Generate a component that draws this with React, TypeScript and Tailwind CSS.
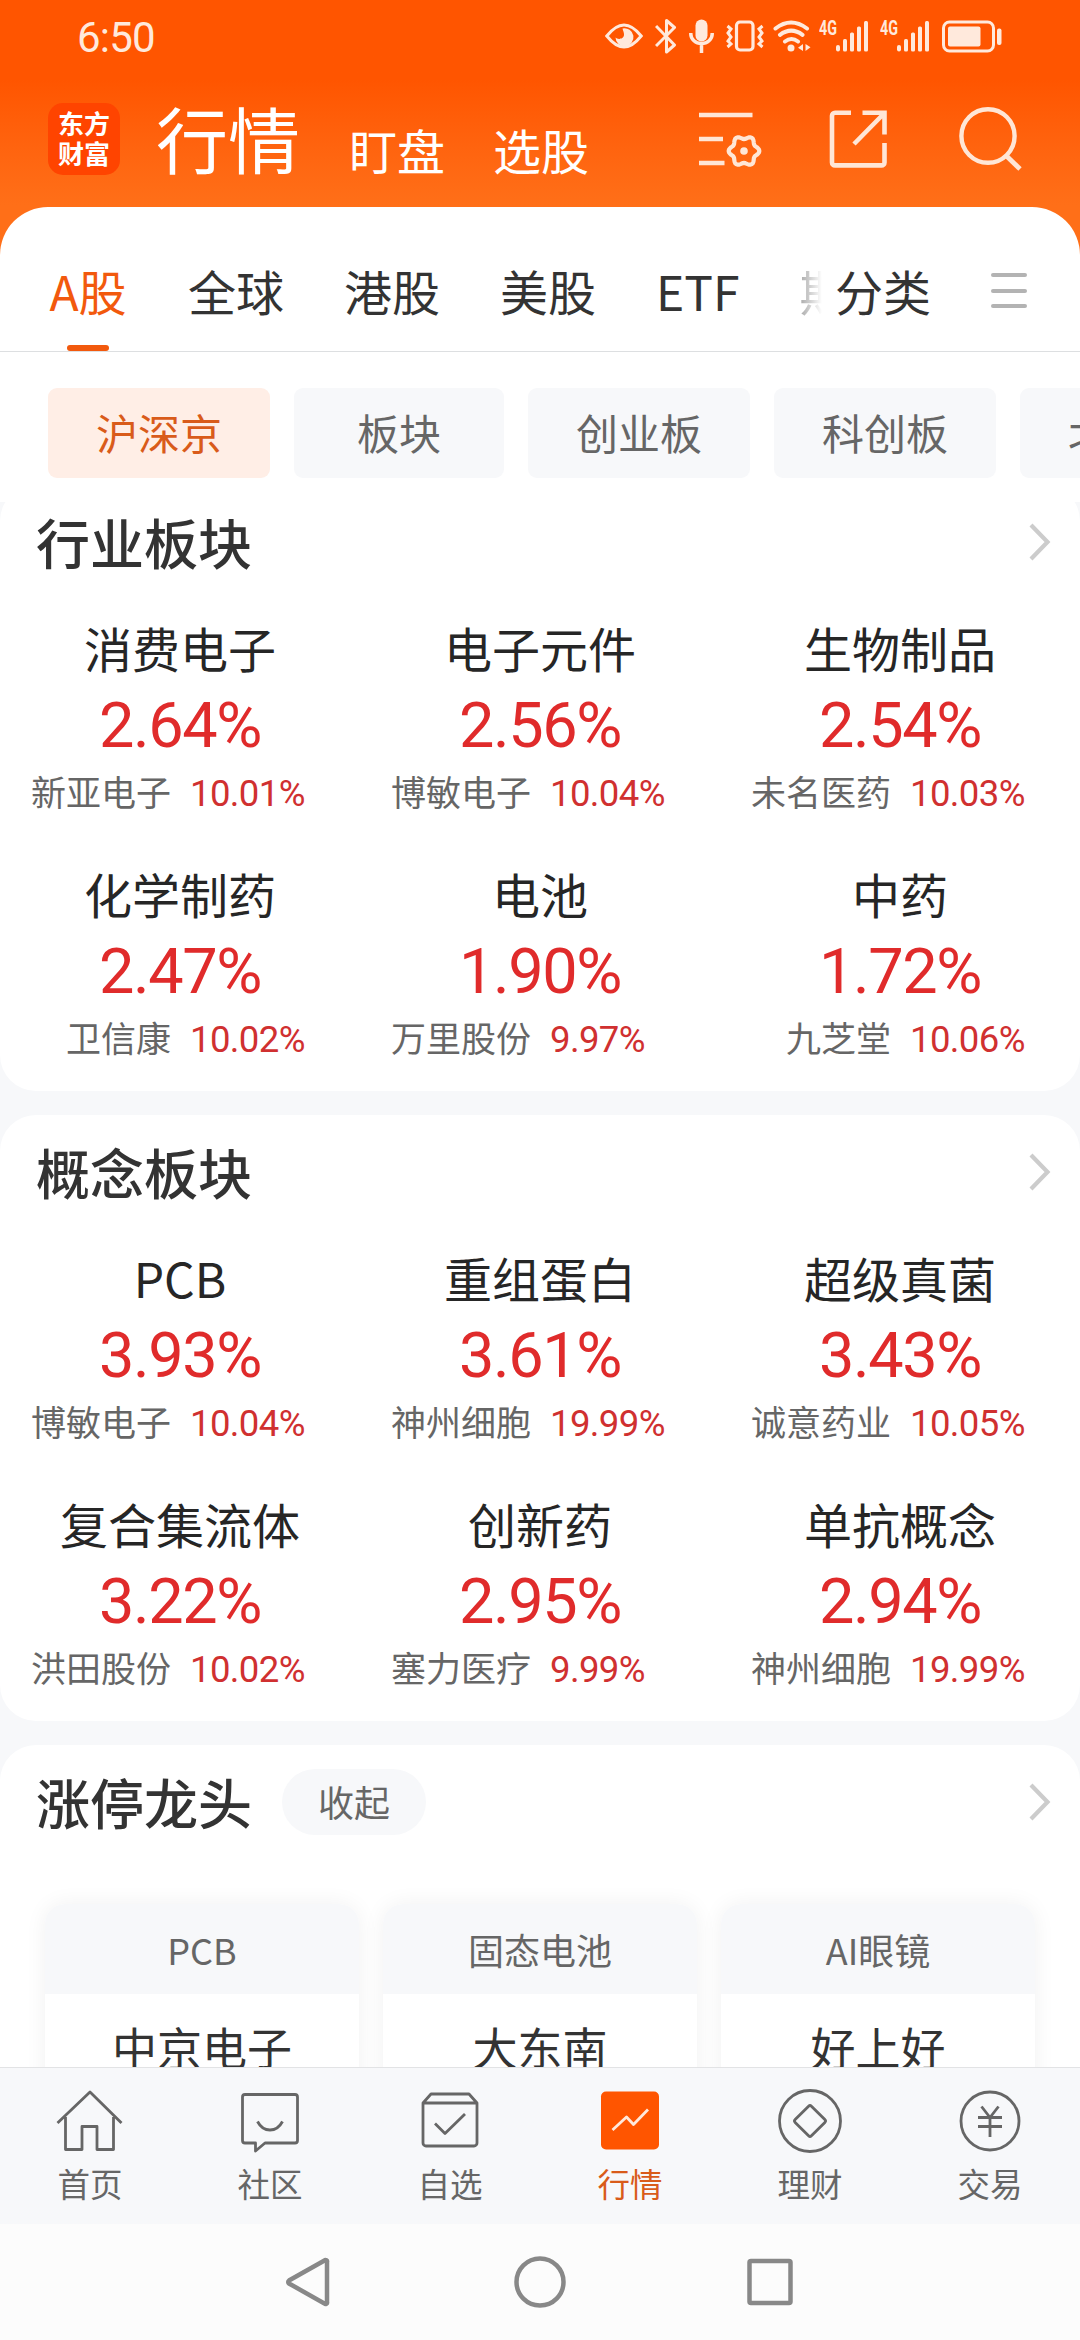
import type { ReactNode } from 'react';

type Stock = {
  name: string;
  change: string;
  leader: string;
  leaderChange: string;
};

const industries: Stock[] = [
  { name: '消费电子', change: '2.64%', leader: '新亚电子', leaderChange: '10.01%' },
  { name: '电子元件', change: '2.56%', leader: '博敏电子', leaderChange: '10.04%' },
  { name: '生物制品', change: '2.54%', leader: '未名医药', leaderChange: '10.03%' },
  { name: '化学制药', change: '2.47%', leader: '卫信康', leaderChange: '10.02%' },
  { name: '电池', change: '1.90%', leader: '万里股份', leaderChange: '9.97%' },
  { name: '中药', change: '1.72%', leader: '九芝堂', leaderChange: '10.06%' },
];

const concepts: Stock[] = [
  { name: 'PCB', change: '3.93%', leader: '博敏电子', leaderChange: '10.04%' },
  { name: '重组蛋白', change: '3.61%', leader: '神州细胞', leaderChange: '19.99%' },
  { name: '超级真菌', change: '3.43%', leader: '诚意药业', leaderChange: '10.05%' },
  { name: '复合集流体', change: '3.22%', leader: '洪田股份', leaderChange: '10.02%' },
  { name: '创新药', change: '2.95%', leader: '塞力医疗', leaderChange: '9.99%' },
  { name: '单抗概念', change: '2.94%', leader: '神州细胞', leaderChange: '19.99%' },
];

const limitLeaders = [
  { sector: 'PCB', stock: '中京电子' },
  { sector: '固态电池', stock: '大东南' },
  { sector: 'AI眼镜', stock: '好上好' },
];

const tabs = ['A股', '全球', '港股', '美股', 'ETF'];

const chips = [
  { label: '沪深京', width: 'w-[222px]' },
  { label: '板块', width: 'w-[210px]' },
  { label: '创业板', width: 'w-[222px]' },
  { label: '科创板', width: 'w-[222px]' },
  { label: '北交所', width: 'w-[222px]' },
];

// Outline of the small six-lobed gear in the header
const gearPath =
  Array.from({ length: 72 }, (_, i) => {
    const a = (i / 72) * Math.PI * 2;
    const r = 13.6 + 1.7 * Math.cos(6 * a);
    return `${i === 0 ? 'M' : 'L'}${(45 + r * Math.cos(a)).toFixed(2)} ${(41 + r * Math.sin(a)).toFixed(2)}`;
  }).join('') + 'Z';

function Signal({ className }: { className: string }) {
  return (
    <svg className={className} width="50" height="40" viewBox="0 0 50 40" fill="currentColor">
      <text x="0" y="18.5" fontSize="19.5" fontWeight="700" fontFamily="Roboto, sans-serif" textLength="18" lengthAdjust="spacingAndGlyphs">
        4G
      </text>
      <rect x="17" y="29" width="4" height="6.5" rx="2" />
      <rect x="24" y="23" width="4" height="12.5" rx="1.5" />
      <rect x="31" y="16.5" width="4" height="19" rx="1.5" />
      <rect x="38" y="10.5" width="4" height="25" rx="1.5" />
      <rect x="45" y="5" width="4" height="30.5" rx="1.5" />
    </svg>
  );
}

function StatusBar() {
  return (
    <div className="flex h-[72px] items-start pl-[77px] pt-4 text-[#ffe9dc]">
      <span className="w-[528px] font-[Roboto,sans-serif] text-[42px] leading-[44px] tracking-[-0.8px]">6:50</span>
      <svg width="38" height="40" viewBox="0 0 38 40" fill="none" stroke="currentColor" strokeWidth="3">
        <path d="M1.8 20C9 11 14 9 19 9s10 2 17.2 11C29 29 24 31 19 31S9 29 1.8 20Z" />
        <path d="M17.5 12.500a9 9 0 1 1-7 9c2 2.500 9 2 8.500-3.500-.2-2-1-3.500-1.500-5.500Z" fill="currentColor" stroke="none" />
      </svg>
      <svg className="ml-3" width="22" height="40" viewBox="0 0 22 40" fill="none" stroke="currentColor" strokeWidth="3" strokeLinejoin="round">
        <path d="M1 10l18.5 19-8 7V4.500l8 7L1 30" />
      </svg>
      <svg className="ml-3" width="25" height="40" viewBox="0 0 25 40" fill="none" stroke="currentColor" strokeWidth="3.5">
        <rect x="6.5" y="3.5" width="12" height="22" rx="6" fill="currentColor" stroke="none" />
        <path d="M1.8 17v1a10.7 9.5 0 0 0 21.4 0v-1M12.5 28v9" />
      </svg>
      <svg className="ml-3" width="38" height="40" viewBox="0 0 38 40" fill="none" stroke="currentColor" strokeWidth="3.2">
        <rect x="10.5" y="6" width="16.5" height="28" rx="3.5" />
        <path d="M1.5 10l3.500 3-3 4 3 4-3 4 3 3-3.500 3M36.500 10L33 13l3 4-3 4 3 4-3 3 3.500 3" strokeWidth="3" />
      </svg>
      <svg className="ml-[9px]" width="38" height="40" viewBox="0 0 38 40" fill="none" stroke="currentColor" strokeWidth="4" strokeLinecap="round">
        <path d="M2.5 12.500q15.500-12 31.500 0M7 18.800q11.200-8.400 22.500 0M12 25.500q6.500-5 13 0" />
        <circle cx="18" cy="32" r="3.5" fill="currentColor" stroke="none" />
        <path d="M30 28v7l-5-3.200zM32.500 28v7l5-3.800z" fill="currentColor" stroke="none" />
      </svg>
      <Signal className="ml-2" />
      <Signal className="ml-[11px]" />
      <svg className="ml-[12px]" width="62" height="40" viewBox="0 0 62 40" fill="none" stroke="currentColor" strokeWidth="3">
        <rect x="1.5" y="6" width="50" height="29" rx="6" />
        <rect x="6" y="10.5" width="32.5" height="20" rx="2" fill="currentColor" stroke="none" />
        <rect x="55" y="12.5" width="4.5" height="16.5" rx="2" fill="currentColor" stroke="none" />
      </svg>
    </div>
  );
}

function AppHeader() {
  return (
    <header className="flex h-[135px] pl-12 text-white">
      <div className="mt-[31px] flex size-[72px] flex-col items-center justify-center rounded-[15px] bg-[#ff4400] pb-[3px] text-[26px] font-bold leading-[30px]">
        <span>东方</span>
        <span>财富</span>
      </div>
      <h1 className="ml-9 mt-[15px] text-[72px] font-normal leading-[100px]">行情</h1>
      <span className="ml-[49px] mt-[42px] text-[48px] leading-[70px]">盯盘</span>
      <span className="ml-12 mt-[42px] text-[48px] leading-[70px]">选股</span>
      <div className="ml-[110px] mt-[38px] flex text-[#ffe6d6]">
        <svg width="64" height="64" viewBox="0 0 64 64" fill="none" stroke="currentColor" strokeWidth="4.6">
          <path d="M0 5h53.5M0 29h24M0 53h25.5" />
          <path d={gearPath} strokeWidth="4.2" />
          <circle cx="45" cy="41" r="3.8" fill="currentColor" stroke="none" />
        </svg>
        <svg className="ml-[66px]" width="60" height="64" viewBox="0 0 60 64" fill="none" stroke="currentColor" strokeWidth="4.6">
          <path d="M22 2.800H6a3 3 0 0 0-3 3V52.400a3 3 0 0 0 3 3H52.500a3 3 0 0 0 3-3V33M33.500 2.800h22v21.700M55 3.500L25 34" />
        </svg>
        <svg className="ml-[70px] overflow-visible" width="66" height="64" viewBox="0 0 66 64" fill="none" stroke="currentColor" strokeWidth="4.4">
          <ellipse cx="29" cy="26" rx="26.6" ry="26.8" />
          <path d="M47 45.500L61 59" strokeWidth="4.8" />
        </svg>
      </div>
    </header>
  );
}

function MarketTabs() {
  return (
    <nav className="flex h-[145px] items-start rounded-t-[48px] border-b border-[#dddfe1] bg-white pl-12 text-[48px] leading-[70px] text-[#333]">
      <div className="flex w-[777px] gap-[60px] overflow-hidden whitespace-nowrap pt-[48px]">
        {tabs.map((tab, index) => (
          <div key={tab} className={index === 0 ? 'flex w-20 flex-col items-center text-[#f2590d]' : ''}>
            {tab}
            {index === 0 && <div className="mt-5 h-1.5 w-[42px] shrink-0 rounded-full bg-[#f2590d]" />}
          </div>
        ))}
        <div className="w-[22px] shrink-0 overflow-hidden bg-linear-to-r from-[#aaa] to-white bg-clip-text text-transparent">期</div>
      </div>
      <span className="ml-[10px] mt-[48px]">分类</span>
      <div className="ml-[60px] mt-[66px] flex w-9 flex-col gap-[11.5px]">
        <div className="h-1 rounded-full bg-[#b3b3b3]" />
        <div className="h-1 rounded-full bg-[#b3b3b3]" />
        <div className="h-1 rounded-full bg-[#b3b3b3]" />
      </div>
    </nav>
  );
}

function BoardChips() {
  return (
    <div className="flex h-[150px] gap-6 overflow-hidden bg-white pl-12 pt-9 text-[42px]">
      {chips.map((chip, index) => (
        <div
          key={chip.label}
          className={`${chip.width} flex h-[90px] shrink-0 items-center justify-center rounded-[9px] pb-[3px] ${
            index === 0 ? 'bg-[#ffeee6] text-[#d95b1a]' : 'bg-[#f7f8fa] text-[#666]'
          }`}
        >
          {chip.label}
        </div>
      ))}
    </div>
  );
}

function CardTitle({ title, children }: { title: string; children?: ReactNode }) {
  return (
    <div className="flex h-[114px] items-center pl-9 pr-[29px]">
      <h2 className="text-[54px] font-medium leading-[78px] text-[#333]">{title}</h2>
      {children}
      <svg className="ml-auto" width="22" height="38" viewBox="0 0 22 38" fill="none" stroke="#ccc" strokeWidth="4.2">
        <path d="M2 2l16.5 17L2 36" />
      </svg>
    </div>
  );
}

function SectorCard({ title, items }: { title: string; items: Stock[] }) {
  return (
    <section className="h-[606px] shrink-0 rounded-[36px] bg-white">
      <CardTitle title={title} />
      <div className="grid auto-rows-[246px] grid-cols-3">
        {items.map((item) => (
          <div key={item.name} className="pt-[18px]">
            <div className="text-center text-[48px] leading-[60px] text-[#262626]">{item.name}</div>
            <div className="mt-[14px] text-center font-[Roboto,sans-serif] text-[63px] leading-[70px] tracking-[-1.4px] text-[#e02b2b]">
              {item.change}
            </div>
            <div className="mt-[6px] flex leading-[48px]">
              <span className="w-[171px] text-right text-[35px] text-[#666]">{item.leader}</span>
              <span className="ml-[19px] mt-[3px] font-[Roboto,sans-serif] text-[36.5px] tracking-[-0.6px] text-[#d03030]">
                {item.leaderChange}
              </span>
            </div>
          </div>
        ))}
      </div>
    </section>
  );
}

function LimitUpCard() {
  return (
    <section className="shrink-0 rounded-[36px] bg-white">
      <CardTitle title="涨停龙头">
        <span className="ml-[30px] flex h-[66px] w-36 items-center justify-center rounded-full bg-[#f7f8fa] pb-[3px] text-[36px] text-[#666]">
          收起
        </span>
      </CardTitle>
      <div className="mt-[45px] flex gap-6 px-[45px]">
        {limitLeaders.map((item) => (
          <div key={item.sector} className="h-[300px] w-[314px] overflow-hidden rounded-[20px] bg-white text-center shadow-[0_0_22px_rgba(0,0,0,0.06)]">
            <div className="h-[90px] bg-[#f7f8fa] text-[36px] leading-[90px] text-[#666]">{item.sector}</div>
            <div className="mt-5 text-[45px] leading-[66px] text-[#333]">{item.stock}</div>
          </div>
        ))}
      </div>
    </section>
  );
}

const navItems: { label: string; icon: ReactNode }[] = [
  {
    label: '首页',
    icon: <path d="M3.500 35L36 4l31.500 31M11.500 29v32.500h16.500V38.500h15V61.500h16.500V29" />,
  },
  {
    label: '社区',
    icon: (
      <>
        <path d="M11 6.500h50a2.500 2.500 0 0 1 2.500 2.500v43.500a2.500 2.500 0 0 1-2.500 2.500H31l-9.500 8V55H11a2.500 2.500 0 0 1-2.500-2.500V9a2.500 2.500 0 0 1 2.500-2.500Z" />
        <path d="M23.500 33.500q4.500 8.500 12.500 8.500t12.500-8.500" />
      </>
    ),
  },
  {
    label: '自选',
    icon: (
      <>
        <path d="M9 15l8-9h38l8 9v40a3 3 0 0 1-3 3H12a3 3 0 0 1-3-3ZM9 15h54" />
        <path d="M21 35.500L31 45.500 51 26" />
      </>
    ),
  },
  {
    label: '行情',
    icon: (
      <>
        <rect x="7" y="3.5" width="58" height="58" rx="5" fill="#ff5500" stroke="none" />
        <path d="M18.500 42L32.500 29l7 7.500L54 21.500" stroke="#ffe9dc" />
      </>
    ),
  },
  {
    label: '理财',
    icon: (
      <>
        <circle cx="36" cy="33" r="30.5" />
        <rect x="24.5" y="21.5" width="23" height="23" rx="2" transform="rotate(45 36 33)" />
      </>
    ),
  },
  {
    label: '交易',
    icon: (
      <>
        <circle cx="36" cy="33" r="29" />
        <path d="M27.500 18.500L36 29.500l8.500-11M36 29.500V49M24 29.500h24M24 38.500h24" />
      </>
    ),
  },
];

function BottomNav() {
  return (
    <nav className="grid h-[157px] shrink-0 grid-cols-6 border-t border-[#e2e3e5] bg-[#f7f8fa]">
      {navItems.map((item) => (
        <div key={item.label} className={`flex flex-col items-center pt-5 ${item.label === '行情' ? 'text-[#d95b1a]' : 'text-[#666]'}`}>
          <svg width="72" height="68" viewBox="0 0 72 68" fill="none" stroke="currentColor" strokeWidth="2.8" strokeLinejoin="round">
            {item.icon}
          </svg>
          <span className="mt-[3px] text-[32.5px] leading-[48px]">{item.label}</span>
        </div>
      ))}
    </nav>
  );
}

// back, home, recents
const systemKeys = [
  'M40.500 4.500L5 24.500a1.800 1.800 0 0 0 0 3L40.500 47.500a1.500 1.500 0 0 0 2.500-1.500V6a1.500 1.500 0 0 0-2.500-1.500Z',
  'M2.500 26a23.500 23.500 0 1 0 47 0a23.500 23.500 0 1 0-47 0',
  'M7 5h38a1.500 1.500 0 0 1 1.500 1.500v39a1.500 1.500 0 0 1-1.500 1.500H7a1.500 1.500 0 0 1-1.500-1.500v-39A1.500 1.500 0 0 1 7 5Z',
];

function SystemNav() {
  return (
    <div className="flex h-[116px] shrink-0 items-center justify-center gap-[178px] bg-[#fcfcfc]">
      {systemKeys.map((d) => (
        <svg key={d} width="52" height="52" viewBox="0 0 52 52" fill="none" stroke="#888" strokeWidth="4.5">
          <path d={d} />
        </svg>
      ))}
    </div>
  );
}

export default function App() {
  return (
    <div className="flex h-[2340px] w-[1080px] flex-col overflow-hidden bg-[#f7f8fa] font-['Noto_Sans_CJK_SC',sans-serif]">
      <div className="shrink-0 bg-linear-to-b from-[#ff5500] from-[80px] to-[#ff6f18] to-[205px]">
        <StatusBar />
        <AppHeader />
        <MarketTabs />
      </div>
      <BoardChips />
      <main className="min-h-0 flex-1 overflow-hidden">
        <div className="-mt-[17px] flex flex-col gap-6">
          <SectorCard title="行业板块" items={industries} />
          <SectorCard title="概念板块" items={concepts} />
          <LimitUpCard />
        </div>
      </main>
      <BottomNav />
      <SystemNav />
    </div>
  );
}
